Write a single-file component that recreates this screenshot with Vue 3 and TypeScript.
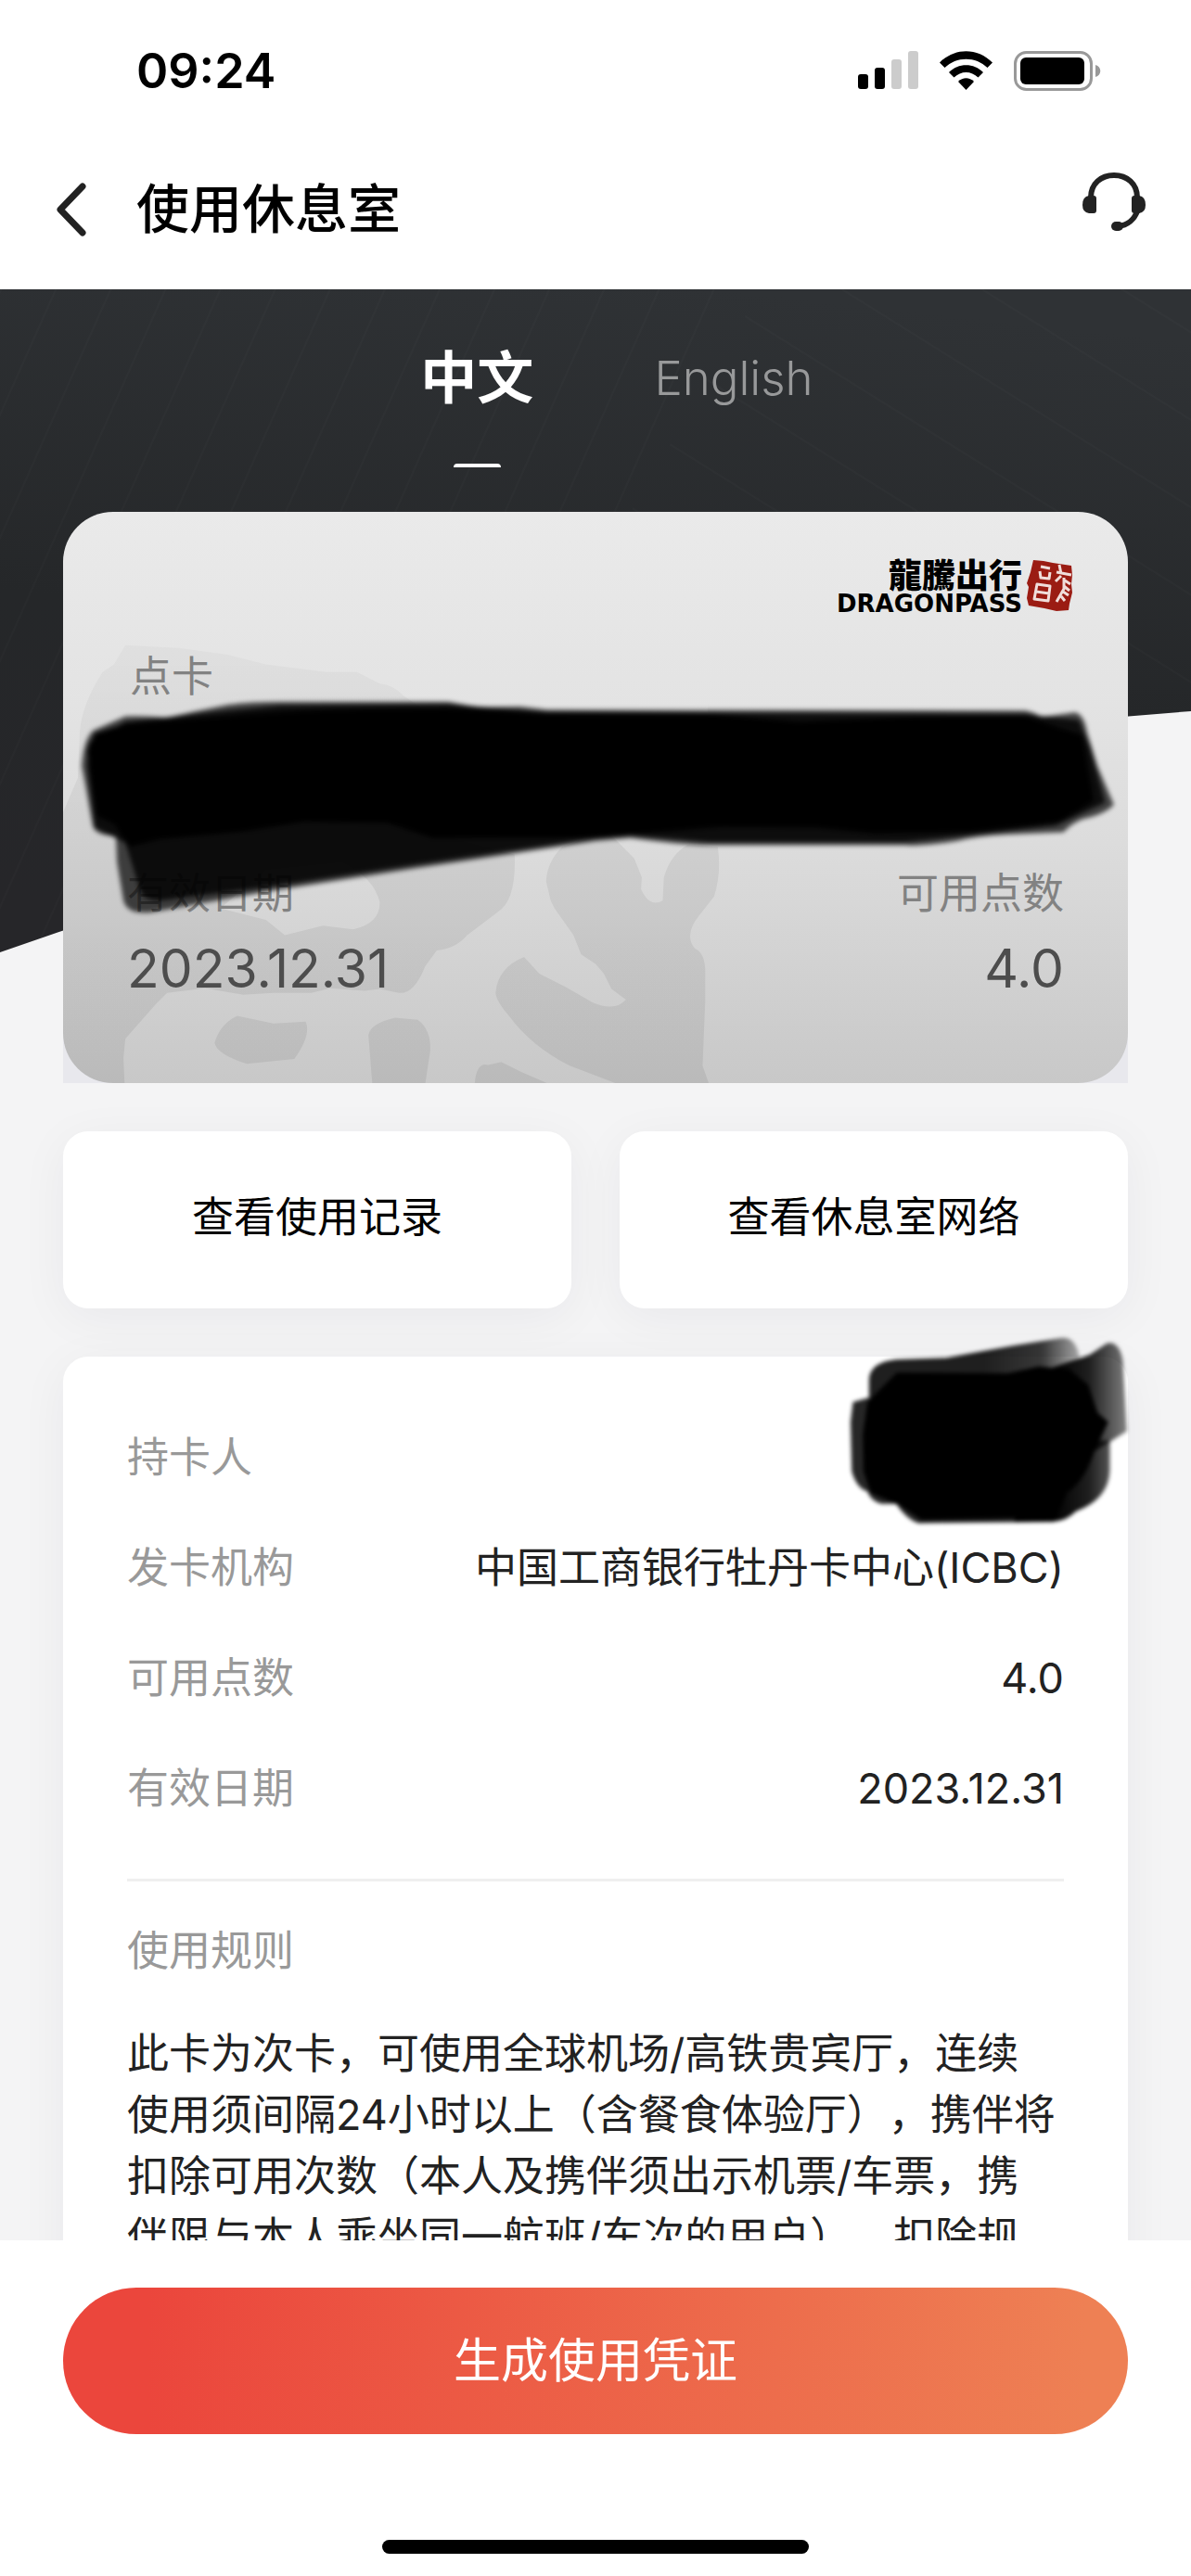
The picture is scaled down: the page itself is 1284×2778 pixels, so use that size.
<script setup lang="ts">
import { ref } from 'vue'

type Lang = 'zh' | 'en'

interface DetailRow {
  label: string
  value: string
}

const lang = ref<Lang>('zh')

const tabs: { id: Lang; label: string }[] = [
  { id: 'zh', label: '中文' },
  { id: 'en', label: 'English' },
]

const details: DetailRow[] = [
  { label: '持卡人', value: '' },
  { label: '发卡机构', value: '中国工商银行牡丹卡中心(ICBC)' },
  { label: '可用点数', value: '4.0' },
  { label: '有效日期', value: '2023.12.31' },
]

const rules: string[] = [
  '此卡为次卡，可使用全球机场/高铁贵宾厅，连续',
  '使用须间隔24小时以上（含餐食体验厅），携伴将',
  '扣除可用次数（本人及携伴须出示机票/车票，携',
  '伴限与本人乘坐同一航班/车次的用户），扣除规',
]
</script>

<template>
  <div class="page">
    <header class="top">
      <div class="status">
        <span class="clock">09:24</span>
        <div class="indicators">
          <svg class="signal" viewBox="0 0 65 42" aria-hidden="true">
            <rect x="0" y="25" width="11" height="16" rx="3" />
            <rect x="18" y="18" width="11" height="23" rx="3" />
            <rect x="36" y="9" width="11" height="32" rx="3" fill="#ccc" />
            <rect x="54" y="0" width="11" height="41" rx="3" fill="#ccc" />
          </svg>
          <svg class="wifi" viewBox="0 0 57 42" aria-hidden="true">
            <path d="M0 12.5C16-4 41-4 57 12.5L51.500 18C39 5.500 18 5.500 5.500 18Z" />
            <path d="M10 23C20 12.500 37 12.500 47 23L41.500 28.500C34 21 23 21 15.500 28.500Z" />
            <path d="M20 33C25 28 32 28 37 33L28.500 42Z" />
          </svg>
          <svg class="battery" viewBox="0 0 94 43" aria-hidden="true">
            <rect x="1.500" y="1.500" width="82" height="40" rx="12" fill="none" stroke="#999" stroke-width="3" />
            <rect x="7" y="7" width="69" height="29" rx="6" />
            <path d="M88 15C95 17 95 26 88 28Z" fill="#999" />
          </svg>
        </div>
      </div>
      <nav class="nav">
        <button class="icon-btn back" type="button" aria-label="返回">
          <svg viewBox="0 0 34 58" aria-hidden="true">
            <path d="M29 4L5 29L29 54" fill="none" stroke="#222" stroke-width="7" stroke-linecap="round" stroke-linejoin="round" />
          </svg>
        </button>
        <h1 class="title">使用休息室</h1>
        <button class="icon-btn service" type="button" aria-label="客服">
          <svg viewBox="0 0 70 64" aria-hidden="true">
            <path d="M10 27C10 12 21 3 35 3S60 12 60 27" fill="none" stroke="#222" stroke-width="6" />
            <path d="M60 42C57 50 50 57 39 58" fill="none" stroke="#222" stroke-width="6" />
            <path d="M8 25H13Q16 25 16 28V41Q16 44 13 44H8Q1 43 1 35Q1 26 8 25Z" fill="#222" />
            <path d="M62 25H57Q54 25 54 28V41Q54 44 57 44H62Q69 43 69 35Q69 26 62 25Z" fill="#222" />
            <rect x="32" y="53" width="13" height="10" rx="5" fill="#222" />
          </svg>
        </button>
      </nav>
    </header>

    <main class="body">
      <svg class="backdrop" viewBox="0 0 1284 715" preserveAspectRatio="none" aria-hidden="true">
        <defs>
          <linearGradient id="night" x1="0.600" y1="0" x2="0.400" y2="1">
            <stop offset="0" stop-color="#2f3235" />
            <stop offset="0.550" stop-color="#252729" />
            <stop offset="1" stop-color="#262629" />
          </linearGradient>
          <pattern id="rays" width="54" height="300" patternUnits="userSpaceOnUse" patternTransform="rotate(24)">
            <path d="M1 0V300" stroke="#fff" stroke-opacity="0.014" stroke-width="2" />
          </pattern>
          <pattern id="rays-right" width="80" height="300" patternUnits="userSpaceOnUse" patternTransform="rotate(-58)">
            <path d="M1 0V300" stroke="#fff" stroke-opacity="0.014" stroke-width="2" />
          </pattern>
        </defs>
        <path d="M0 0H1284V455Q592 506 0 715Z" fill="url(#night)" />
        <path d="M0 0H820L680 240V495Q340 595 0 715Z" fill="url(#rays)" />
        <path d="M820 0H1284V455Q980 475 680 520V240Z" fill="url(#rays-right)" />
      </svg>

      <div class="content">
        <div class="tabs" role="tablist">
          <button
            v-for="tab in tabs"
            :key="tab.id"
            type="button"
            role="tab"
            class="tab"
            :class="{ active: lang === tab.id }"
            :aria-selected="lang === tab.id"
            @click="lang = tab.id"
          >
            {{ tab.label }}
          </button>
        </div>

        <section class="pass">
          <div class="pass-face">
            <svg class="dragon" viewBox="166 28 2804 1487" preserveAspectRatio="none" aria-hidden="true">
              <defs>
                <linearGradient id="ink" gradientUnits="userSpaceOnUse" x1="0" y1="300" x2="0" y2="1515">
                  <stop offset="0" stop-opacity="0.020" />
                  <stop offset="0.500" stop-opacity="0.060" />
                  <stop offset="1" stop-opacity="0.070" />
                </linearGradient>
              </defs>
              <path
                fill="url(#ink)"
                fill-rule="evenodd"
                d="M166 810L205 720L210 600Q215 530 270 445L300 425L330 375L470 382L600 400L700 425L860 445H940L1000 475Q1040 480 1060 505L1200 600V880L1355 920Q1360 1040 1310 1070L1230 1130Q1200 1165 1150 1170L1120 1210Q1090 1285 1050 1280L1000 1270L960 1275L870 1268L820 1280H720L640 1285L540 1268L440 1280L410 1310L330 1400L325 1450L328 1515H166ZM580 1060L700 1090L750 1130L850 1105L930 1115Q1000 1100 1000 1045Q985 980 900 940L700 960Z"
              />
              <path fill="url(#ink)" d="M565 1410Q580 1360 625 1340L720 1360L805 1355Q820 1390 775 1452L650 1465Q570 1440 565 1410Z" />
              <path fill="url(#ink)" d="M970 1390Q975 1360 1040 1345L1100 1350Q1135 1375 1133 1430L1120 1515H980Z" />
              <path fill="url(#ink)" d="M1250 1515Q1255 1460 1285 1468L1320 1460L1370 1485L1440 1515Z" />
              <path
                fill="url(#ink)"
                d="M1305 1280Q1310 1215 1380 1187L1420 1230L1490 1265L1560 1305Q1620 1330 1648 1298L1610 1270L1590 1230L1568 1205L1530 1180L1510 1130L1460 1060L1450 1040L1438 990Q1440 940 1480 900L1600 860L1670 930L1690 980L1688 1010Q1710 1060 1745 1040L1748 980Q1765 920 1810 895L1890 900Q1900 970 1880 1030L1840 1080Q1800 1130 1830 1165Q1855 1175 1857 1220V1300L1850 1470L1866 1515H1620L1500 1470Q1400 1420 1340 1340Q1305 1300 1305 1280Z"
              />
            </svg>

            <div class="brand">
              <div class="brand-words">
                <span class="brand-zh">龍騰出行</span>
                <span class="brand-en">DRAGONPASS</span>
              </div>
              <svg class="seal" viewBox="0 0 51 56" aria-hidden="true">
                <path d="M8 1L19 2L29 4L49 7L50 17L49 27L50 36L47 48L46 55L33 56L20 53L3 50L1 42L3 30L1 26L5 14Z" fill="#9b1c13" />
                <g fill="none" stroke="#f0dedb" stroke-width="3" stroke-linejoin="round">
                  <path d="M16 8L26 10M15 13L16 20L25 21L26 14M12 27L9 43L24 45L26 29ZM11 35L25 37" />
                  <path d="M36 6L38 16M33 14L49 17M38 18L32 24M41 20V32L33 46M42 23L48 27M41 29L47 34M40 35L46 39M38 40L42 45" />
                </g>
              </svg>
            </div>

            <p class="pass-kind">点卡</p>

            <dl class="pass-facts">
              <div>
                <dt>有效日期</dt>
                <dd>2023.12.31</dd>
              </div>
              <div class="right">
                <dt>可用点数</dt>
                <dd>4.0</dd>
              </div>
            </dl>
          </div>

          <svg class="marker wide" viewBox="166 28 2804 1487" preserveAspectRatio="none" aria-hidden="true">
            <defs>
              <filter id="soft" x="-5%" y="-10%" width="110%" height="120%">
                <feGaussianBlur stdDeviation="7" />
              </filter>
            </defs>
            <g filter="url(#soft)">
              <path
                fill-opacity="0.700"
                d="M215 690Q220 620 245 597L330 560Q380 558 440 564Q520 545 600 530Q660 522 740 522H1180L1260 537L1370 535L1440 543L2700 545Q2725 550 2742 562L2830 550Q2855 555 2862 600L2890 690L2933 790Q2910 815 2850 828Q2820 840 2800 862L2650 868Q2570 872 2520 885Q2430 900 2380 896H1870Q1790 895 1660 877L1568 885L1100 955L700 1017L400 1070Q335 1078 325 1040L308 940L305 872Q245 870 243 840L225 740Z"
              />
              <path
                fill-opacity="0.800"
                d="M230 690L235 630L330 575L600 545L740 532L1180 528L1440 550L2700 555L2840 570L2870 640L2910 785L2780 845L2550 870L2380 888H1870L1660 870L1568 877L1100 945L700 1005L420 1040Q370 1040 365 1000L330 890L250 850Z"
              />
              <path
                d="M230 650L250 605L330 580L600 560Q800 540 1180 540L1440 553L1880 555L2100 575L2400 562L2700 560L2850 610L2880 780L2790 835L2550 862L2300 865L2150 850L1900 848L1568 875L1140 877L1020 838L800 835L640 860L420 880L340 900L300 840L255 820Z"
              />
            </g>
          </svg>
        </section>

        <div class="actions">
          <button class="action" type="button">查看使用记录</button>
          <button class="action" type="button">查看休息室网络</button>
        </div>

        <section class="sheet">
          <dl class="details">
            <div v-for="row in details" :key="row.label" class="detail">
              <dt>{{ row.label }}</dt>
              <dd>{{ row.value }}</dd>
            </div>
          </dl>
          <h2 class="rules-title">使用规则</h2>
          <p class="rules"><template v-for="(line, i) in rules" :key="i">{{ line }}<br /></template></p>

          <svg class="marker small" viewBox="150 50 930 640" aria-hidden="true">
            <defs>
              <linearGradient id="fade" gradientUnits="userSpaceOnUse" x1="820" y1="0" x2="1065" y2="0">
                <stop offset="0" stop-opacity="1" />
                <stop offset="0.500" stop-opacity="0.880" />
                <stop offset="1" stop-opacity="0.500" />
              </linearGradient>
              <linearGradient id="fade-top" gradientUnits="userSpaceOnUse" x1="600" y1="0" x2="915" y2="0">
                <stop offset="0" stop-opacity="0.880" />
                <stop offset="0.600" stop-opacity="0.780" />
                <stop offset="1" stop-opacity="0.300" />
              </linearGradient>
            </defs>
            <g filter="url(#soft)">
              <path fill="url(#fade-top)" d="M230 260V200Q235 145 320 137L480 132L700 92L850 68Q900 60 912 132L840 170L600 200L300 260Z" />
              <path fill="url(#fade)" d="M820 165L945 122L1000 85Q1040 75 1052 140L1065 370L960 435L860 400Z" />
              <path fill="url(#fade)" d="M780 400L1010 400V500Q1005 590 900 630Q870 660 830 662L700 664Z" />
              <path fill-opacity="0.850" d="M240 258L178 275L170 340L174 500Q190 555 225 565Q235 595 270 605H318Q350 655 390 668L830 664L860 600L300 250Z" />
              <path d="M225 275L320 180L680 182L780 160L880 170L940 220L970 310L1005 340L960 435Q930 530 870 570Q850 640 800 650L400 658L330 610L235 570L212 500L210 380Z" />
            </g>
          </svg>
        </section>
      </div>
    </main>

    <footer class="bottom">
      <button class="primary" type="button">生成使用凭证</button>
      <div class="home-bar"></div>
    </footer>
  </div>
</template>

<style>
body {
  margin: 0;
  background: #fff;
}
</style>

<style scoped>
.page {
  display: flex;
  flex-direction: column;
  height: 100vh;
  background: #fff;
  color: #222;
  font-family: Inter, "Noto Sans CJK SC", sans-serif;
  font-size: 45px;
  line-height: 66px;
  text-spacing-trim: space-all;
}

button {
  margin: 0;
  padding: 0;
  border: 0;
  background: none;
  color: inherit;
  font: inherit;
}

h1,
h2,
p,
dl,
dd {
  margin: 0;
}

svg {
  display: block;
}

.top {
  flex: none;
  background: #fff;
  color: #000;
}

.status {
  display: flex;
  align-items: center;
  justify-content: space-between;
  height: 140px;
  padding: 12px 97px 0 147px;
  box-sizing: border-box;
}

.clock {
  padding-top: 2px;
  font-size: 52px;
  font-weight: 600;
}

.indicators {
  display: flex;
  align-items: center;
  gap: 23px;
}

.signal {
  width: 65px;
  height: 42px;
}

.wifi {
  width: 57px;
  height: 42px;
}

.battery {
  width: 94px;
  height: 43px;
}

.nav {
  display: flex;
  align-items: center;
  height: 172px;
  padding: 0 48px 0 60px;
}

.back {
  width: 87px;
}

.back svg {
  width: 34px;
  height: 58px;
}

.title {
  flex: 1;
  font-size: 57px;
  font-weight: 500;
}

.service {
  margin-bottom: 16px;
}

.service svg {
  width: 70px;
  height: 64px;
}

.body {
  position: relative;
  flex: 1;
  min-height: 0;
  overflow-y: auto;
  scrollbar-width: none;
  background: #f4f4f5;
}

.backdrop {
  position: absolute;
  top: 0;
  left: 0;
  width: 100%;
  height: 715px;
}

.content {
  position: relative;
  padding: 0 68px;
}

.tabs {
  display: flex;
  justify-content: center;
  gap: 130px;
  height: 240px;
  padding-left: 46px;
}

.tab {
  display: flex;
  flex-direction: column;
  align-items: center;
  height: 192px;
  color: #98999a;
  font-size: 51px;
  font-weight: 300;
  line-height: 192px;
}

.tab.active {
  color: #fff;
  font-size: 61px;
  font-weight: 700;
}

.tab.active::after {
  content: "";
  flex: none;
  width: 51px;
  height: 4px;
  margin-top: -4px;
  border-radius: 4px 4px 0 0;
  background: #fff;
}

.pass {
  position: relative;
  background: linear-gradient(transparent 80%, #e8e8ed 80%);
}

.pass-face {
  position: relative;
  display: flex;
  flex-direction: column;
  height: 616px;
  padding: 51px 69px 0;
  box-sizing: border-box;
  border-radius: 54px;
  overflow: hidden;
  background: linear-gradient(#eaeaea, #e3e3e3 34%, #dcdcdc 58%, #c8c8c8);
}

.dragon,
.marker {
  position: absolute;
  top: 0;
  left: 0;
  width: 100%;
  height: 100%;
}

.brand {
  position: relative;
  display: flex;
  align-items: center;
  justify-content: flex-end;
  gap: 4px;
  height: 56px;
  margin-right: -10px;
  color: #000;
}

.brand-words {
  display: flex;
  flex-direction: column;
  align-items: flex-end;
}

.brand-zh {
  font-family: "Noto Sans CJK TC", sans-serif;
  font-size: 36px;
  font-weight: 900;
  line-height: 40px;
}

.brand-en {
  font-family: "DejaVu Sans", sans-serif;
  font-size: 26px;
  font-weight: 700;
  line-height: 26px;
}

.seal {
  width: 51px;
  height: 56px;
}

.pass-kind {
  position: relative;
  margin-top: 38px;
  padding-left: 3px;
  color: #828282;
}

.pass-facts {
  position: relative;
  display: flex;
  justify-content: space-between;
  margin-top: 168px;
}

.pass-facts dt {
  color: #828282;
}

.pass-facts dd {
  margin-top: 6px;
  color: #4d4d4d;
  font-size: 57px;
  line-height: 84px;
}

.right {
  text-align: right;
}

.actions {
  display: flex;
  gap: 52px;
  margin-top: 52px;
}

.action {
  flex: 1;
  height: 191px;
  padding-bottom: 5px;
  border-radius: 27px;
  background: #fff;
  box-shadow: 0 10px 52px rgba(20, 20, 60, 0.05);
  color: #000;
}

.sheet {
  position: relative;
  margin-top: 52px;
  padding: 76px 69px;
  border-radius: 27px;
  background: #fff;
  box-shadow: 0 10px 52px rgba(20, 20, 60, 0.05);
}

.details {
  display: flex;
  flex-direction: column;
  gap: 53px;
  padding-bottom: 64px;
  border-bottom: 3px solid #efefef;
}

.detail {
  display: flex;
  justify-content: space-between;
  min-height: 66px;
}

.detail dt,
.rules-title {
  color: #999;
  font-size: 45px;
  font-weight: 400;
}

.rules-title {
  margin-top: 42px;
}

.rules {
  margin-top: 45px;
  white-space: nowrap;
}

.marker.small {
  top: -26px;
  right: -4px;
  left: auto;
  width: 310px;
  height: 213px;
}

.bottom {
  flex: none;
  display: flex;
  flex-direction: column;
  align-items: center;
  padding: 51px 68px 24px;
  background: #fff;
}

.primary {
  width: 100%;
  height: 158px;
  border-radius: 79px;
  background: linear-gradient(90deg, #eb463c 8%, #ee8054 96%);
  color: #fff;
  font-size: 51px;
}

.home-bar {
  width: 40%;
  height: 15px;
  margin-top: 114px;
  border-radius: 8px;
  background: #000;
}
</style>
